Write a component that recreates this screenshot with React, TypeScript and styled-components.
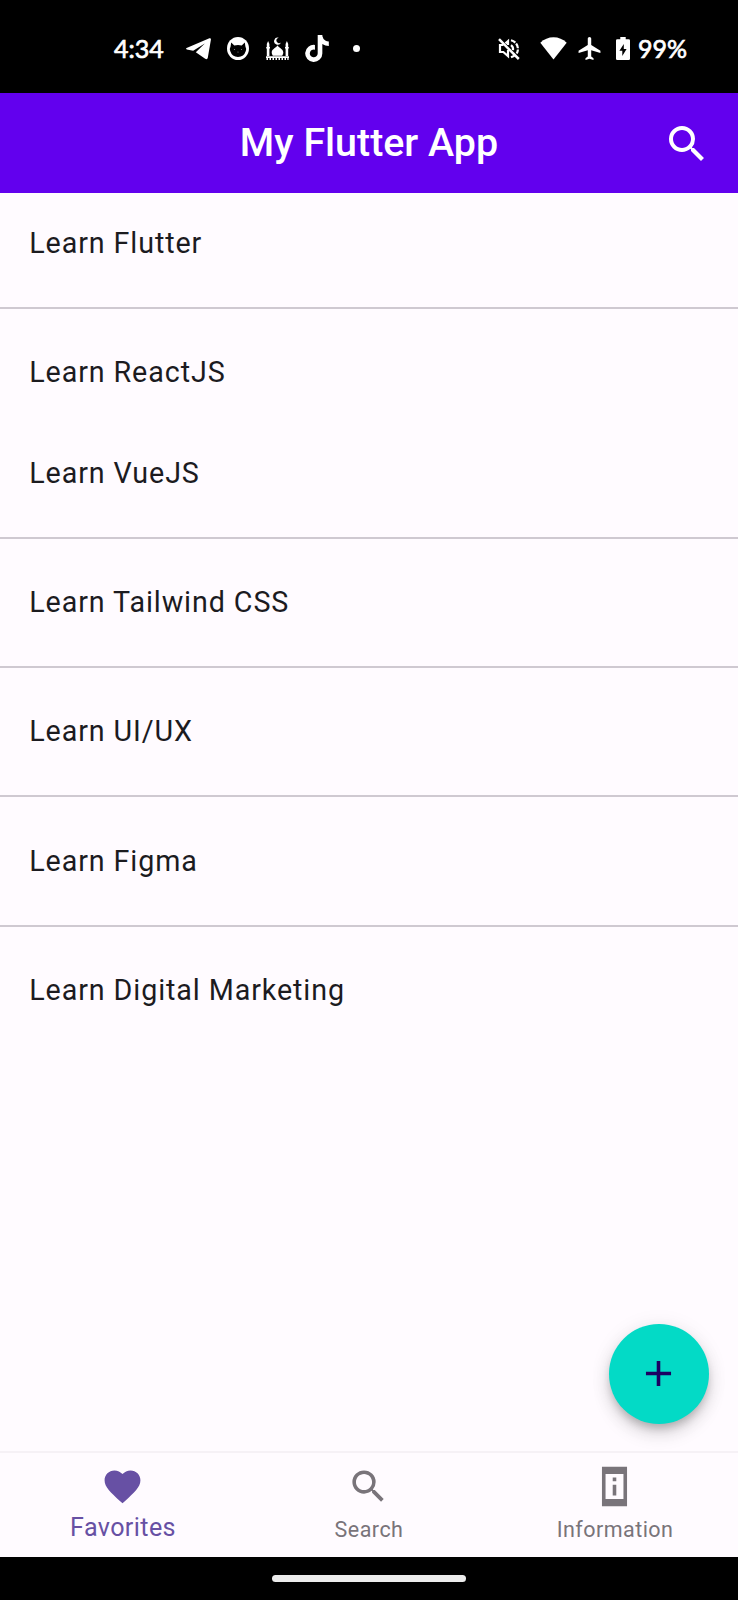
import React from "react";
import styled, { createGlobalStyle } from "styled-components";
import { FaTiktok } from "react-icons/fa";

const GlobalStyle = createGlobalStyle`
  * { box-sizing: border-box; }
  body { margin: 0; background: #000; font-family: Roboto, sans-serif; }
`;

const Screen = styled.div`
  width: 738px;
  height: 1600px;
  display: flex;
  flex-direction: column;
  background: #fffbff;
`;

const StatusBar = styled.header`
  height: 93px;
  flex: none;
  padding: 4px 51px 0 114px;
  display: flex;
  align-items: center;
  justify-content: space-between;
  background: #000;
  color: #fff;
`;

const StatusGroup = styled.div`
  display: flex;
  align-items: center;
`;

const StatusText = styled.span<{ $width: number; $gap?: number }>`
  width: ${(p) => p.$width}px;
  margin-left: ${(p) => p.$gap ?? 0}px;
  padding-bottom: 2px;
  font-family: Lato, sans-serif;
  font-weight: 400;
  font-size: 25px;
  line-height: 30px;
  -webkit-text-stroke: 0.7px currentColor;
  white-space: nowrap;
`;

const StatusIcon = styled.svg<{ $gap: number }>`
  display: block;
  flex: none;
  margin-left: ${(p) => p.$gap}px;
  fill: currentColor;
`;

const TikTok = styled(FaTiktok)`
  width: 24px;
  height: 27px;
  margin-left: 16px;
`;

const MoreDot = styled.i`
  width: 7px;
  height: 7px;
  margin-left: 24px;
  border-radius: 50%;
  background: #fff;
`;

const AppBar = styled.div`
  height: 100px;
  flex: none;
  display: grid;
  grid-template-columns: 100px 1fr 100px;
  align-items: center;
  background: #6200ee;
  color: #fff;
`;

const Title = styled.h1`
  grid-column: 2;
  margin: 0;
  text-align: center;
  font-size: 39.4px;
  line-height: 50px;
  font-weight: 500;
`;

const IconButton = styled.button`
  justify-self: end;
  margin: 2px 27px 0 0;
  padding: 0;
  border: 0;
  background: none;
  color: inherit;
  line-height: 0;
`;

const Glyph = styled.svg<{ $size: number }>`
  display: block;
  width: ${(p) => p.$size}px;
  height: ${(p) => p.$size}px;
  fill: currentColor;
`;

const List = styled.main`
  flex: 1;
  min-height: 0;
  padding-top: 0.5px;
`;

const Row = styled.div`
  height: 100.5px;
  padding: 0 0 1px 29.2px;
  display: flex;
  align-items: center;
  color: #1c1b1f;
  font-size: 28.7px;
  line-height: 42px;
  letter-spacing: 0.9px;
`;

const Divider = styled.hr`
  height: 2px;
  margin: 13.35px 0;
  border: 0;
  background: #cfc9d1;
`;

const Fab = styled.button`
  position: absolute;
  left: 609px;
  top: 1323.5px;
  width: 100px;
  height: 100px;
  padding: 0 1px 0 0;
  border: 0;
  border-radius: 50%;
  display: grid;
  place-items: center;
  background: #03dac6;
  color: #1c0062;
  box-shadow: 0 6px 9px -2px rgba(0, 0, 0, 0.2), 0 10px 18px rgba(0, 0, 0, 0.13), 0 2px 22px rgba(0, 0, 0, 0.07);
`;

const BottomNav = styled.nav`
  height: 106px;
  flex: none;
  display: grid;
  grid-template-columns: repeat(3, 1fr);
  border-top: 2px solid #f6f1f6;
  background: #fffbff;
`;

const NavItem = styled.div<{ $active?: boolean }>`
  display: flex;
  flex-direction: column;
  align-items: center;
  padding-top: 11.5px;
  color: ${(p) => (p.$active ? "#6750a4" : "#79747a")};

  ${Glyph} {
    margin-right: 1px;
  }
`;

const NavLabel = styled.span<{ $active?: boolean }>`
  height: 36px;
  margin-top: 3px;
  font-size: ${(p) => (p.$active ? 25.1 : 21.5)}px;
  line-height: ${(p) => (p.$active ? 34 : 37)}px;
  letter-spacing: ${(p) => (p.$active ? 0.4 : 0.46)}px;
`;

const GestureBar = styled.footer`
  height: 43px;
  flex: none;
  display: flex;
  justify-content: center;
  padding-top: 18px;
  background: #000;
`;

const GesturePill = styled.div`
  width: 194px;
  height: 7px;
  border-radius: 4px;
  background: #ececec;
`;

const SEARCH =
  "M15.5 14h-.79l-.28-.27A6.47 6.47 0 0 0 16 9.5 6.5 6.5 0 1 0 9.5 16c1.61 0 3.09-.59 4.23-1.57l.27.28v.79l5 4.99L20.49 19l-4.99-5zm-6 0C7.01 14 5 11.99 5 9.5S7.01 5 9.5 5 14 7.01 14 9.5 11.99 14 9.5 14z";
const HEART =
  "M12 21.35l-1.45-1.32C5.4 15.36 2 12.28 2 8.5 2 5.42 4.42 3 7.5 3c1.74 0 3.41.81 4.5 2.09C13.09 3.81 14.76 3 16.5 3 19.58 3 22 5.42 22 8.5c0 3.78-3.4 6.86-8.55 11.54L12 21.35z";
const INFO = "M13 7h-2v2h2V7zm0 4h-2v6h2v-6zM19 1H5v22h14V1zm-2 18H7V5h10v14z";
const PLUS = "M19 13h-6v6h-2v-6H5v-2h6V5h2v6h6v2z";

const Icon = ({ path, size = 43 }: { path: string; size?: number }) => (
  <Glyph viewBox="0 0 24 24" $size={size} aria-hidden="true">
    <path d={path} fillRule="evenodd" />
  </Glyph>
);

const items = [
  { label: "Learn Flutter", divided: true },
  { label: "Learn ReactJS", divided: false },
  { label: "Learn VueJS", divided: true },
  { label: "Learn Tailwind CSS", divided: true },
  { label: "Learn UI/UX", divided: true },
  { label: "Learn Figma", divided: true },
  { label: "Learn Digital Marketing", divided: false },
];

const tabs = [
  { label: "Favorites", icon: HEART, active: true },
  { label: "Search", icon: SEARCH, active: false },
  { label: "Information", icon: INFO, active: false },
];

const Notifications = () => (
  <StatusGroup>
    <StatusText $width={50}>4:34</StatusText>
    <StatusIcon $gap={22} width="25" height="22" viewBox="0 0 25 22">
      <path d="M.6 10.1 23.4.3Q25.1-.2 24.9 1.7L21.8 19.7Q21.3 22 19.2 20.7L9.8 14.2 18.8 5.6 7.2 12.8.8 11.4Q-.5 10.9.6 10.1Z" />
    </StatusIcon>
    <StatusIcon $gap={16} width="22" height="23" viewBox="0 0 22 23">
      <ellipse cx="11" cy="11.5" rx="11" ry="11.5" />
      <path
        fill="#000"
        d="M4.2 5.5 7.3 8.4Q11 7.5 14.7 8.4L17.8 5.5 18.4 9.5Q19.6 11.500 18.800 14 17 19.800 11 20 5 19.800 3.200 14 2.400 11.500 3.600 9.500Z"
      />
      <g fill="#888">
        <circle cx="7.5" cy="12.5" r=".6" />
        <circle cx="14.5" cy="12.5" r=".6" />
        <circle cx="11" cy="15" r=".6" />
      </g>
    </StatusIcon>
    <StatusIcon $gap={17} width="23" height="23" viewBox="0 0 23 23">
      <path d="M12.8.7A3.6 3.6 0 1 0 15 5.6 2.8 2.8 0 1 1 12.8.7Z" />
      <path d="M11.5 8.3C12 10.6 17.3 11.8 17.3 15.5Q17.3 17 16.2 18.8H6.8Q5.7 17 5.7 15.5C5.7 11.8 11 10.6 11.5 8.3Z" />
      <path d="M2.1 4 3.4 7V10H4V11.5H3.4V19H.8V11.5H.2V10H.8V7ZM20.9 4 22.2 7V10H22.8V11.5H22.2V19H19.6V11.5H19V10H19.6V7Z" />
      <path d="M0 19.3H23V21H0ZM.5 21H2V23H.5ZM3.5 21H5V23H3.5ZM6.5 21H8V23H6.5ZM9.5 21H11V23H9.5ZM12.5 21H14V23H12.5ZM15.5 21H17V23H15.5ZM18.5 21H20V23H18.5ZM21.3 21H22.6V23H21.3Z" />
    </StatusIcon>
    <TikTok />
    <MoreDot />
  </StatusGroup>
);

const SystemStatus = () => (
  <StatusGroup>
    <StatusIcon $gap={0} width="22" height="22" viewBox="0 0 22 22">
      <g fill="none" stroke="#fff" strokeWidth="2.2">
        <path d="M5.5 7H2V14H5.3L10 18V12M7.5 5.4 10 3.2V7" />
        <path d="M13 7.2Q15.5 9 15 12.2" />
        <path d="M13 2.2A9 9 0 0 1 18.7 15.5" strokeDasharray="5 1.2" />
        <path d="M13 19.2 16.5 17.7" />
        <path d="M1 1.2 20.8 21" strokeWidth="2.5" />
      </g>
    </StatusIcon>
    <StatusIcon $gap={20} width="27" height="23" viewBox="0 0 27 23">
      <path d="M.3 5.8Q6 .3 13.5.3T26.7 5.8L13.5 22.5Z" />
    </StatusIcon>
    <StatusIcon $gap={11} width="23" height="23" viewBox="2 2 19 20">
      <path d="M21 16v-2l-8-5V3.5c0-.83-.67-1.500-1.500-1.500S10 2.670 10 3.500V9l-8 5v2l8-2.500V19l-2 1.500V22l3.500-1 3.500 1v-1.500L13 19v-5.500l8 2.500z" />
    </StatusIcon>
    <StatusIcon $gap={15} width="14" height="23" viewBox="0 0 14 23">
      <path
        fillRule="evenodd"
        d="M4.3 0H9.7V2.3H12.7Q14 2.3 14 3.6V21.7Q14 23 12.7 23H1.3Q0 23 0 21.7V3.6Q0 2.3 1.3 2.3H4.3ZM7.8 7 3.4 13.7H6.3V19L10.6 11.9H7.8Z"
      />
    </StatusIcon>
    <StatusText $width={49} $gap={8}>99%</StatusText>
  </StatusGroup>
);

export default function App() {
  return (
    <>
      <GlobalStyle />
      <Screen>
        <StatusBar>
          <Notifications />
          <SystemStatus />
        </StatusBar>
        <AppBar>
          <Title>My Flutter App</Title>
          <IconButton aria-label="Search">
            <Icon path={SEARCH} size={48} />
          </IconButton>
        </AppBar>
        <List>
          {items.map(({ label, divided }) => (
            <React.Fragment key={label}>
              <Row>{label}</Row>
              {divided && <Divider />}
            </React.Fragment>
          ))}
        </List>
        <Fab aria-label="Add">
          <Icon path={PLUS} />
        </Fab>
        <BottomNav>
          {tabs.map(({ label, icon, active }) => (
            <NavItem key={label} $active={active}>
              <Icon path={icon} />
              <NavLabel $active={active}>{label}</NavLabel>
            </NavItem>
          ))}
        </BottomNav>
        <GestureBar>
          <GesturePill />
        </GestureBar>
      </Screen>
    </>
  );
}
